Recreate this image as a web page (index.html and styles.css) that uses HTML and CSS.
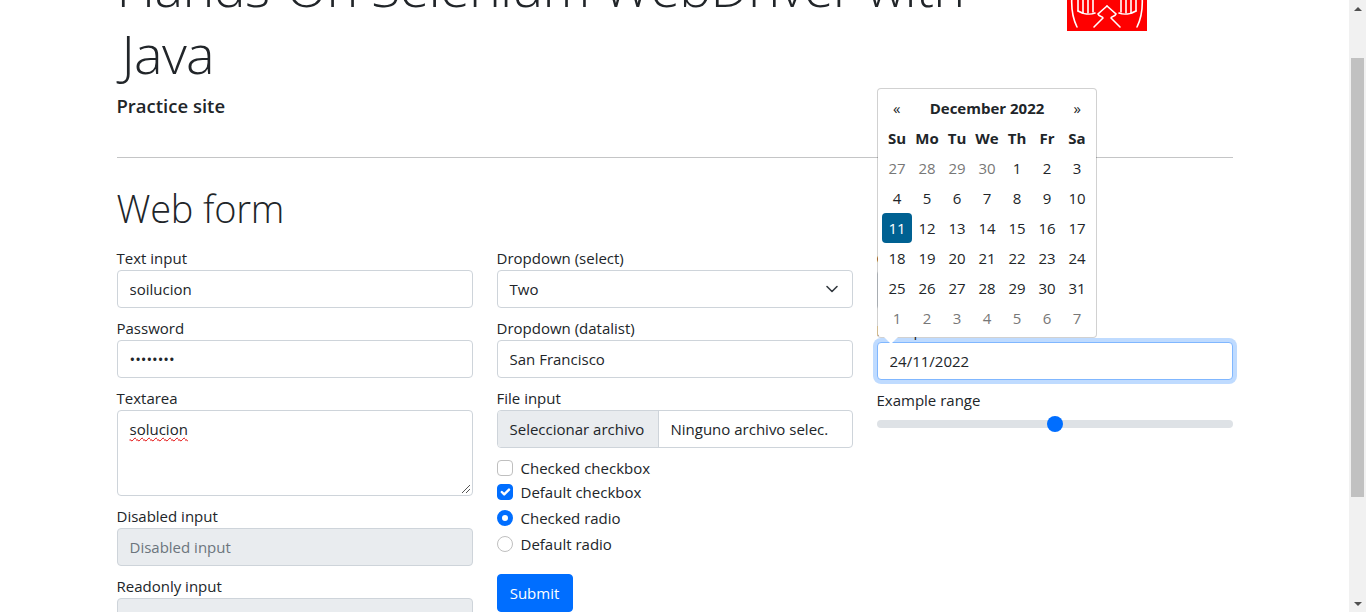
FILE: index.html
```html
<!DOCTYPE html>
<html lang="en">
<head>
<meta charset="UTF-8">
<meta name="viewport" content="width=device-width, initial-scale=1.0">
<title>Web form</title>
<link rel="stylesheet" href="styles.css">
</head>
<body>
<div class="window">
    <div class="page">
        <div class="container">
            <header class="top">
                <div class="top-text">
                    <h1 class="title">Hands-On Selenium WebDriver with <span class="title-end">Java</span></h1>
                    <h5 class="subtitle">Practice site</h5>
                </div>
                <div class="logo">
                    <svg width="80" height="80" viewBox="0 0 80 80">
                        <rect width="80" height="80" fill="#ff0000"/>
                        <g id="hand" fill="none" stroke="#fff" stroke-width="1.6" stroke-linecap="round">
                            <path d="M5 44C4 56 6 68 10 76"/>
                            <path d="M11 44v16M16 44v18M21 44v18M26 44v17"/>
                            <path d="M11 60c5 3 12 4 17 2"/>
                            <path d="M40 55l-9 8c1 3 5 2 5 4l-9 9"/>
                        </g>
                        <use href="#hand" transform="translate(80 0) scale(-1 1)"/>
                    </svg>
                </div>
            </header>
            <hr class="rule">
            <h1 class="form-title">Web form</h1>

            <form class="form-grid">
                <div class="col">
                    <label class="field">Text input
                        <input class="control" type="text" value="soilucion">
                    </label>
                    <label class="field">Password
                        <input class="control" type="password" value="solucion">
                    </label>
                    <label class="field">Textarea
                        <span class="control area"><span class="misspelt">solucion</span>
                            <svg class="grip" width="10" height="10" viewBox="0 0 10 10"><path d="M1 9l8-8M5 9l4-4" stroke="#555" stroke-width="1" fill="none"/></svg>
                        </span>
                    </label>
                    <label class="field">Disabled input
                        <input class="control" type="text" placeholder="Disabled input" disabled>
                    </label>
                    <label class="field">Readonly input
                        <input class="control locked" type="text" value="Readonly input" readonly>
                    </label>
                </div>

                <div class="col">
                    <label class="field">Dropdown (select)
                        <span class="control select">Two
                            <svg width="16" height="16" viewBox="0 0 16 16"><path d="M3 5.5l5 5 5-5" fill="none" stroke="#343a40" stroke-width="1.6" stroke-linecap="round" stroke-linejoin="round"/></svg>
                        </span>
                    </label>
                    <label class="field">Dropdown (datalist)
                        <input class="control" type="text" value="San Francisco">
                    </label>
                    <label class="field">File input
                        <span class="control file"><span class="file-btn">Seleccionar archivo</span><span class="file-name">Ninguno archivo selec.</span></span>
                    </label>
                    <div class="checks">
                        <label class="check"><span class="box"></span>Checked checkbox</label>
                        <label class="check"><span class="box on">
                            <svg width="16" height="16" viewBox="0 0 20 20"><path d="M6 10l3 3 6-6" fill="none" stroke="#fff" stroke-width="3" stroke-linecap="round" stroke-linejoin="round"/></svg>
                        </span>Default checkbox</label>
                        <label class="check radio-row"><span class="radio on"></span>Checked radio</label>
                        <label class="check radio-row"><span class="radio"></span>Default radio</label>
                    </div>
                    <button class="submit" type="button">Submit</button>
                </div>

                <div class="col">
                    <label class="field">Color picker
                        <span class="control color"></span>
                    </label>
                    <label class="field">Date picker
                        <input class="control focused" type="text" value="24/11/2022">
                    </label>
                    <label class="field">Example range
                        <span class="range"><span class="range-thumb"></span></span>
                    </label>
                </div>
            </form>
        </div>

        <div class="datepicker">
            <div class="dp-row dp-head"><span>«</span><strong>December 2022</strong><span>»</span></div>
            <div class="dp-grid" id="days"></div>
        </div>
    </div>

    <div class="scrollbar">
        <span class="arrow up"></span>
        <div class="track"><div class="thumb"></div></div>
        <span class="arrow down"></span>
    </div>
</div>

<script>
    // Calendar cells for December 2022
    const grid = document.getElementById('days');
    ['Su', 'Mo', 'Tu', 'We', 'Th', 'Fr', 'Sa'].forEach(d => {
        const el = document.createElement('span');
        el.className = 'dow';
        el.textContent = d;
        grid.appendChild(el);
    });
    const days = [27, 28, 29, 30];
    for (let i = 1; i <= 31; i++) days.push(i);
    for (let i = 1; i <= 7; i++) days.push(i);
    days.forEach((d, i) => {
        const el = document.createElement('span');
        el.className = 'day';
        if (i < 4 || i >= 35) el.classList.add('old');
        if (i === 14) el.classList.add('active');
        el.textContent = d;
        grid.appendChild(el);
    });
</script>
</body>
</html>
```
FILE: styles.css
```css
* {
    box-sizing: border-box;
}
html, body {
    height: 100%;
    margin: 0;
    overflow: hidden;
}
body {
    font-family: "Open Sans", "Liberation Sans", sans-serif;
    font-size: 15px;
    line-height: 24px;
    color: #212529;
    background-color: #fff;
}
.window {
    display: flex;
    height: 612px;
}
.page {
    flex: 1;
    position: relative;
    overflow: hidden;
}
.container {
    width: 1116px;
    margin: -47px 0 0 116.5px;
}
.top {
    display: flex;
    justify-content: space-between;
    padding-right: 86px;
}
.top-text {
    width: 900px;
}
.title {
    margin: 0 0 7px;
    font-size: 54px;
    font-weight: 300;
    line-height: 67px;
    letter-spacing: -0.75px;
}
.title-end {
    margin-left: 5px;
}
.subtitle {
    margin: 0;
    font-size: 18.5px;
    font-weight: 600;
    line-height: 24px;
}
.logo {
    height: 80px;
    margin-top: -2px;
    line-height: 0;
}
.rule {
    margin: 39px 0 0;
    border: 0;
    border-top: 1px solid #c4c5c6;
}
.form-title {
    margin: 26px 0 0;
    font-size: 38px;
    font-weight: 300;
    line-height: 48px;
    letter-spacing: -0.2px;
}
.form-grid {
    display: grid;
    grid-template-columns: repeat(3, 356px);
    gap: 24px;
    margin-top: 14px;
}
.field {
    display: block;
    margin-bottom: 8px;
}
.control {
    display: block;
    width: 100%;
    height: 38px;
    padding: 6px 12px;
    font: inherit;
    color: #212529;
    background-color: #fff;
    border: 1px solid #ced4da;
    border-radius: 4px;
    outline: none;
}
.area {
    position: relative;
    height: 86px;
}
.misspelt {
    text-decoration: underline wavy #e00000 1px;
    text-underline-offset: 2px;
}
.grip {
    position: absolute;
    right: 1px;
    bottom: 1px;
}
input:disabled, .locked {
    background-color: #e9ecef;
}
input:disabled::placeholder {
    color: #6c757d;
    opacity: 1;
}
.select {
    display: flex;
    justify-content: space-between;
    align-items: center;
}
.file {
    display: flex;
    padding: 0;
    overflow: hidden;
}
.file-btn {
    width: 161px;
    padding: 6px 12px;
    white-space: nowrap;
    background-color: #e9ecef;
    border-right: 1px solid #ced4da;
}
.file-name {
    padding: 6px 12px;
    white-space: nowrap;
}
.checks {
    margin-top: 8px;
}
.check {
    display: flex;
    align-items: center;
    gap: 8px;
    height: 24px;
}
.radio-row {
    margin-top: 2px;
}
.box, .radio {
    width: 16px;
    height: 16px;
    background-color: #fff;
    border: 1px solid #bfbfbf;
}
.box {
    border-radius: 4px;
}
.radio {
    border-radius: 50%;
}
.box.on {
    background-color: #006eff;
    border-color: #006eff;
    line-height: 0;
}
.box.on svg {
    margin: -1px;
}
.radio.on {
    border: 5px solid #006eff;
}
.submit {
    display: block;
    width: 76px;
    height: 38px;
    margin-top: 18px;
    padding: 6px 0;
    font: inherit;
    color: #fff;
    background-color: #006eff;
    border: 1px solid #006eff;
    border-radius: 4px;
}
.color {
    width: 48px;
    height: 40px;
}
.focused {
    border-color: #80b7ff;
    box-shadow: 0 0 0 4px #bfdbff;
}
.range {
    display: block;
    position: relative;
    height: 8px;
    margin-top: 8px;
    background-color: #dee2e6;
    border-radius: 8px;
}
.range-thumb {
    position: absolute;
    left: 170px;
    top: -4px;
    width: 16px;
    height: 16px;
    background-color: #006eff;
    border-radius: 50%;
}
.datepicker {
    position: absolute;
    left: 877px;
    top: 88px;
    width: 220px;
    height: 250px;
    padding: 4px;
    background-color: #fff;
    background-clip: padding-box;
    border: 1px solid rgba(0, 0, 0, 0.18);
    border-radius: 4px;
}
.datepicker::after {
    content: "";
    position: absolute;
    left: 6px;
    bottom: -7px;
    border-left: 7px solid transparent;
    border-right: 7px solid transparent;
    border-top: 7px solid #fff;
}
.dp-row {
    display: flex;
    justify-content: space-between;
    align-items: center;
    height: 30px;
    padding: 0 11px;
}
.dp-head strong {
    font-weight: 700;
}
.dp-grid {
    display: grid;
    grid-template-columns: repeat(7, 30px);
    grid-auto-rows: 30px;
}
.dow, .day {
    display: flex;
    justify-content: center;
    align-items: center;
    border-radius: 4px;
}
.dow {
    font-weight: 700;
}
.old {
    color: #777;
}
.active {
    color: #fff;
    background-color: #006192;
}
.scrollbar {
    display: flex;
    flex-direction: column;
    width: 17px;
    background-color: #f1f1f1;
}
.arrow {
    height: 17px;
    display: flex;
    justify-content: center;
    align-items: center;
}
.arrow.up::before {
    content: "";
    border-left: 4px solid transparent;
    border-right: 4px solid transparent;
    border-bottom: 4px solid #505050;
}
.arrow.down::before {
    content: "";
    border-left: 4px solid transparent;
    border-right: 4px solid transparent;
    border-top: 4px solid #505050;
}
.track {
    flex: 1;
    padding: 41px 2px 0;
}
.thumb {
    height: 439px;
    background-color: #c1c1c1;
}
```
